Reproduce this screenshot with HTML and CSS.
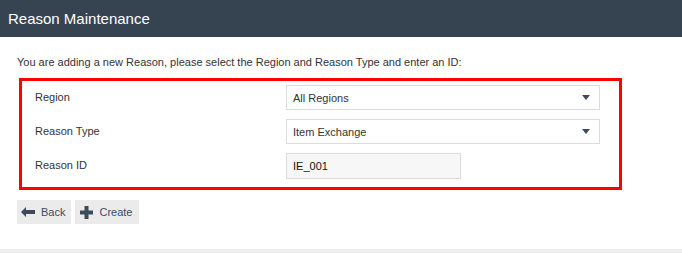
FILE: index.html
```html
<!DOCTYPE html>
<html lang="en">
<head>
    <meta charset="UTF-8">
    <title>Reason Maintenance</title>
    <link rel="stylesheet" href="styles.css">
</head>
<body>
    <header class="page-header">
        <h1 class="page-title">Reason Maintenance</h1>
    </header>
    <div class="content">
        <p class="intro">You are adding a new Reason, please select the Region and Reason Type and enter an ID:</p>
        <div class="form-box">
            <div class="form-row">
                <label class="form-label">Region</label>
                <div class="select">
                    <span>All Regions</span>
                    <span class="caret"></span>
                </div>
            </div>
            <div class="form-row">
                <label class="form-label">Reason Type</label>
                <div class="select">
                    <span>Item Exchange</span>
                    <span class="caret"></span>
                </div>
            </div>
            <div class="form-row">
                <label class="form-label">Reason ID</label>
                <div class="text-input">IE_001</div>
            </div>
        </div>
        <div class="actions">
            <button class="btn btn-back">
                <svg width="14" height="10" viewBox="0 0 14 10"><path d="M0 5 L5 0 L5 3 L14 3 L14 7 L5 7 L5 10 Z" fill="#3b4b5b"/></svg>
                Back
            </button>
            <button class="btn">
                <svg width="13" height="13" viewBox="0 0 13 13"><path d="M4.5 0 H8.5 V4.5 H13 V8.5 H8.5 V13 H4.5 V8.5 H0 V4.5 H4.5 Z" fill="#3b4b5b"/></svg>
                Create
            </button>
        </div>
    </div>
    <div class="footer-bar"></div>
</body>
</html>
```

FILE: styles.css
```css
body {
    margin: 0;
    font-family: 'Liberation Sans', Arial, sans-serif;
    color: #333;
    background: #fff;
    height: 253px;
    display: flex;
    flex-direction: column;
    overflow: hidden;
}

.page-header {
    background-color: #364452;
    height: 37px;
    display: flex;
    align-items: center;
    padding: 0 8px;
}

.page-title {
    margin: 0 0 1px;
    font-size: 15px;
    font-weight: normal;
    color: #fff;
}

.content {
    flex-grow: 1;
    padding: 0 17px;
}

.intro {
    margin: 18px 0 9px;
    font-size: 11px;
    line-height: 14px;
}

.form-box {
    width: 597px;
    margin-left: 2px;
    border: 3px solid #f00;
    padding: 4px 0 9px;
}

.form-row {
    display: flex;
    align-items: center;
    height: 25px;
    margin-bottom: 9px;
}

.form-row:last-child {
    margin-bottom: 0;
}

.form-label {
    width: 251px;
    padding-left: 13px;
    font-size: 11px;
    color: #333;
    margin-top: -2px;
}

.select {
    box-sizing: border-box;
    width: 314px;
    height: 25px;
    border: 1px solid #dcdcdc;
    display: flex;
    align-items: center;
    justify-content: space-between;
    padding: 0 9px 0 6px;
    font-size: 11px;
    color: #333;
}

.caret {
    width: 0;
    height: 0;
    border-left: 4px solid transparent;
    border-right: 4px solid transparent;
    border-top: 5px solid #3b4b5b;
}

.text-input {
    box-sizing: border-box;
    width: 175px;
    height: 26px;
    border: 1px solid #dcdcdc;
    background: #f7f7f7;
    display: flex;
    align-items: center;
    padding-left: 6px;
    font-size: 11px;
    color: #111;
}

.actions {
    display: flex;
    gap: 4px;
    margin-top: 10px;
}

.btn {
    display: flex;
    align-items: center;
    gap: 6px;
    height: 24px;
    padding: 0 6px 0 5px;
    border: none;
    background: #ebebeb;
    color: #3b4b5b;
    font-family: 'Liberation Sans', Arial, sans-serif;
    font-size: 11px;
}

.btn-back {
    padding-left: 4px;
}

.footer-bar {
    height: 4px;
    background: #eeeeee;
}
```
